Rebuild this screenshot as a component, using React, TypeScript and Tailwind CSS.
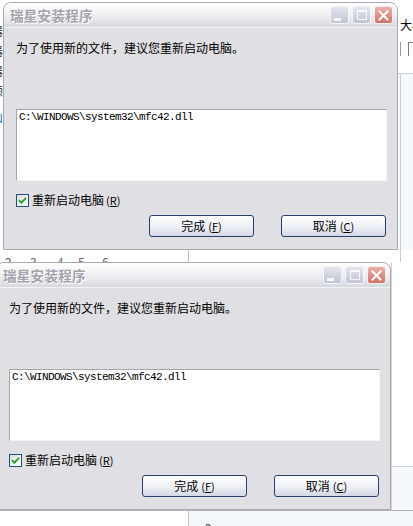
import React from "react";

const cjk = "font-['Noto_Sans_CJK_SC',sans-serif]";

const TitleBtn = ({ kind }: { kind: "min" | "max" | "close" }) => {
  if (kind === "close") {
    return (
      <div className="w-[19px] h-[18px] rounded-[3px] border border-[#f6f0ef] bg-gradient-to-b from-[#eab1a9] to-[#d07468] flex items-center justify-center">
        <svg width="11" height="11" viewBox="0 0 11 11">
          <path d="M1.5 1.5 L9.5 9.5 M9.5 1.5 L1.5 9.5" stroke="#ffffff" strokeWidth="2" strokeLinecap="square" />
        </svg>
      </div>
    );
  }
  return (
    <div className="w-[19px] h-[18px] rounded-[3px] border border-[#f4f5f8] bg-gradient-to-b from-[#e4e6ee] to-[#c1c4d1] flex items-center justify-center">
      {kind === "min" ? (
        <div className="w-[7px] h-[3px] bg-[#f6f7fa] mt-[8px] mr-[4px]" />
      ) : (
        <div className="w-[10px] h-[10px] border border-[#f6f7fa] border-t-[2px]" />
      )}
    </div>
  );
};

const Check = () => (
  <div className="w-[13px] h-[13px] border border-[#1c5180] bg-gradient-to-br from-[#dcdcd7] to-[#ffffff] flex items-center justify-center">
    <svg width="9" height="9" viewBox="0 0 9 9">
      <path d="M1 4.2 L3.4 6.6 L8 1.8" stroke="#21a121" strokeWidth="1.8" fill="none" />
    </svg>
  </div>
);

const XpButton = ({ label, hot }: { label: string; hot: string }) => (
  <button className="w-[105px] h-[22px] rounded-[3px] border border-[#29406c] bg-gradient-to-b from-[#ffffff] via-[#f1f2f6] to-[#d4d8e6] text-[12px] leading-[14px] text-black flex items-center justify-center">
    {label}
    <span className="ml-[3px] text-[11px]">
      (<span className="underline">{hot}</span>)
    </span>
  </button>
);

const Dialog = ({ shift }: { shift?: string }) => (
  <div className={`w-[395px] h-[248px] shrink-0 flex flex-col border border-[#a9a9b1] rounded-t-[8px] bg-[#e0dfe3] overflow-hidden ${shift ?? ""}`}>
    <div className="h-[25px] shrink-0 flex items-center pl-[6px] pr-[4px] bg-gradient-to-b from-[#fefefe] via-[#f0f0f3] to-[#d8d8e0] border-b border-[#f3f3f6]">
      <span className="text-[13.5px] leading-[16px] font-bold tracking-[0.3px] text-[#a3a3ab] [text-shadow:1px_1px_0_#ffffff]">
        瑞星安装程序
      </span>
      <div className="ml-auto flex gap-[3px]">
        <TitleBtn kind="min" />
        <TitleBtn kind="max" />
        <TitleBtn kind="close" />
      </div>
    </div>
    <div className="h-[221px] shrink-0 pl-[12px] pr-[10px] pt-[13px] flex flex-col">
      <p className="text-[12px] leading-[14px] text-black">为了使用新的文件，建议您重新启动电脑。</p>
      <div className="mt-[54px] h-[72px] shrink-0 bg-white border border-[#a5a5aa] border-r-[#f3f3f3] border-b-[#f3f3f3] pl-[2px] font-['Liberation_Mono',monospace] text-[11px] leading-[14px] tracking-[-0.6px] text-black">
        C:\WINDOWS\system32\mfc42.dll
      </div>
      <div className="mt-[12px] h-[14px] shrink-0 flex items-center gap-[3px]">
        <Check />
        <span className="text-[12px] leading-[14px] text-black">
          重新启动电脑
          <span className="ml-[2px] text-[11px]">
            (<span className="underline">R</span>)
          </span>
        </span>
      </div>
      <div className="mt-[8px] flex justify-end gap-[27px] pr-[1px]">
        <XpButton label="完成" hot="F" />
        <XpButton label="取消" hot="C" />
      </div>
    </div>
  </div>
);

export default function App() {
  return (
    <div className={`w-[413px] h-[526px] bg-white overflow-hidden flex flex-col ${cjk}`}>
      {/* first screenshot */}
      <div className="h-[250px] shrink-0 flex pt-[2px]">
        <div className="w-[3px] shrink-0 overflow-hidden">
          <div className="ml-[-9px] pt-[19px] text-[12px] leading-[20px] text-[#333]">
            <div>器</div>
            <div>器</div>
            <div>器</div>
            <div>顺</div>
            <div className="text-[#2a6fc9] mt-[6px]">山</div>
          </div>
        </div>
        <Dialog />
        <div className="flex-1 flex flex-col overflow-hidden">
          <div className="h-[72px] shrink-0 border-b border-[#c9d0da] pl-[2px] pt-[16px]">
            <div className="text-[12px] leading-[14px] text-black whitespace-nowrap">大小</div>
            <div className="mt-[10px] h-[14px] flex gap-[7px]">
              <div className="w-px bg-[#9a9a9a]" />
              <div className="w-[10px] border-l border-t border-[#777]" />
            </div>
          </div>
          <div className="flex-1 bg-[#f6f9fc] flex">
            <div className="ml-[2px] w-px bg-[#c9ccd3]" />
          </div>
        </div>
      </div>

      {/* gap between screenshots */}
      <div className="h-[12px] shrink-0 flex overflow-hidden text-[12px] leading-[14px] text-[#666]">
        <div className="w-[188px] h-[12px] shrink-0 flex pt-[5px] overflow-hidden">
          <span className="w-[30px] pl-[5px]">2</span>
          <span className="w-[27px]">3</span>
          <span className="w-[21px]">4</span>
          <span className="w-[24px]">5</span>
          <span className="w-[86px]">6</span>
        </div>
        <div className="w-px h-[12px] bg-[#b9b9b9]" />
        <div className="flex-1" />
        <div className="w-px h-[12px] mr-[12px] bg-[#c9ccd3]" />
      </div>

      {/* second screenshot */}
      <div className="h-[248px] shrink-0 flex">
        <Dialog shift="ml-[-4px]" />
        <div className="flex-1 flex flex-col border-l border-[#d5d5d5]">
          <div className="h-[204px] shrink-0 bg-white" />
          <div className="flex-1 border-t border-[#c9d0da] bg-[#f6f9fc]" />
        </div>
      </div>

      <div className="h-[16px] shrink-0 flex border-t border-[#b3b3b8] overflow-hidden">
        <div className="w-[188px] bg-white" />
        <div className="w-px bg-[#c2c2c2]" />
        <div className="flex-1 bg-[#f4f8fc] overflow-hidden pl-[16px] pt-[10px] text-[12px] leading-[14px] text-[#555]">
          2
        </div>
      </div>
    </div>
  );
}
